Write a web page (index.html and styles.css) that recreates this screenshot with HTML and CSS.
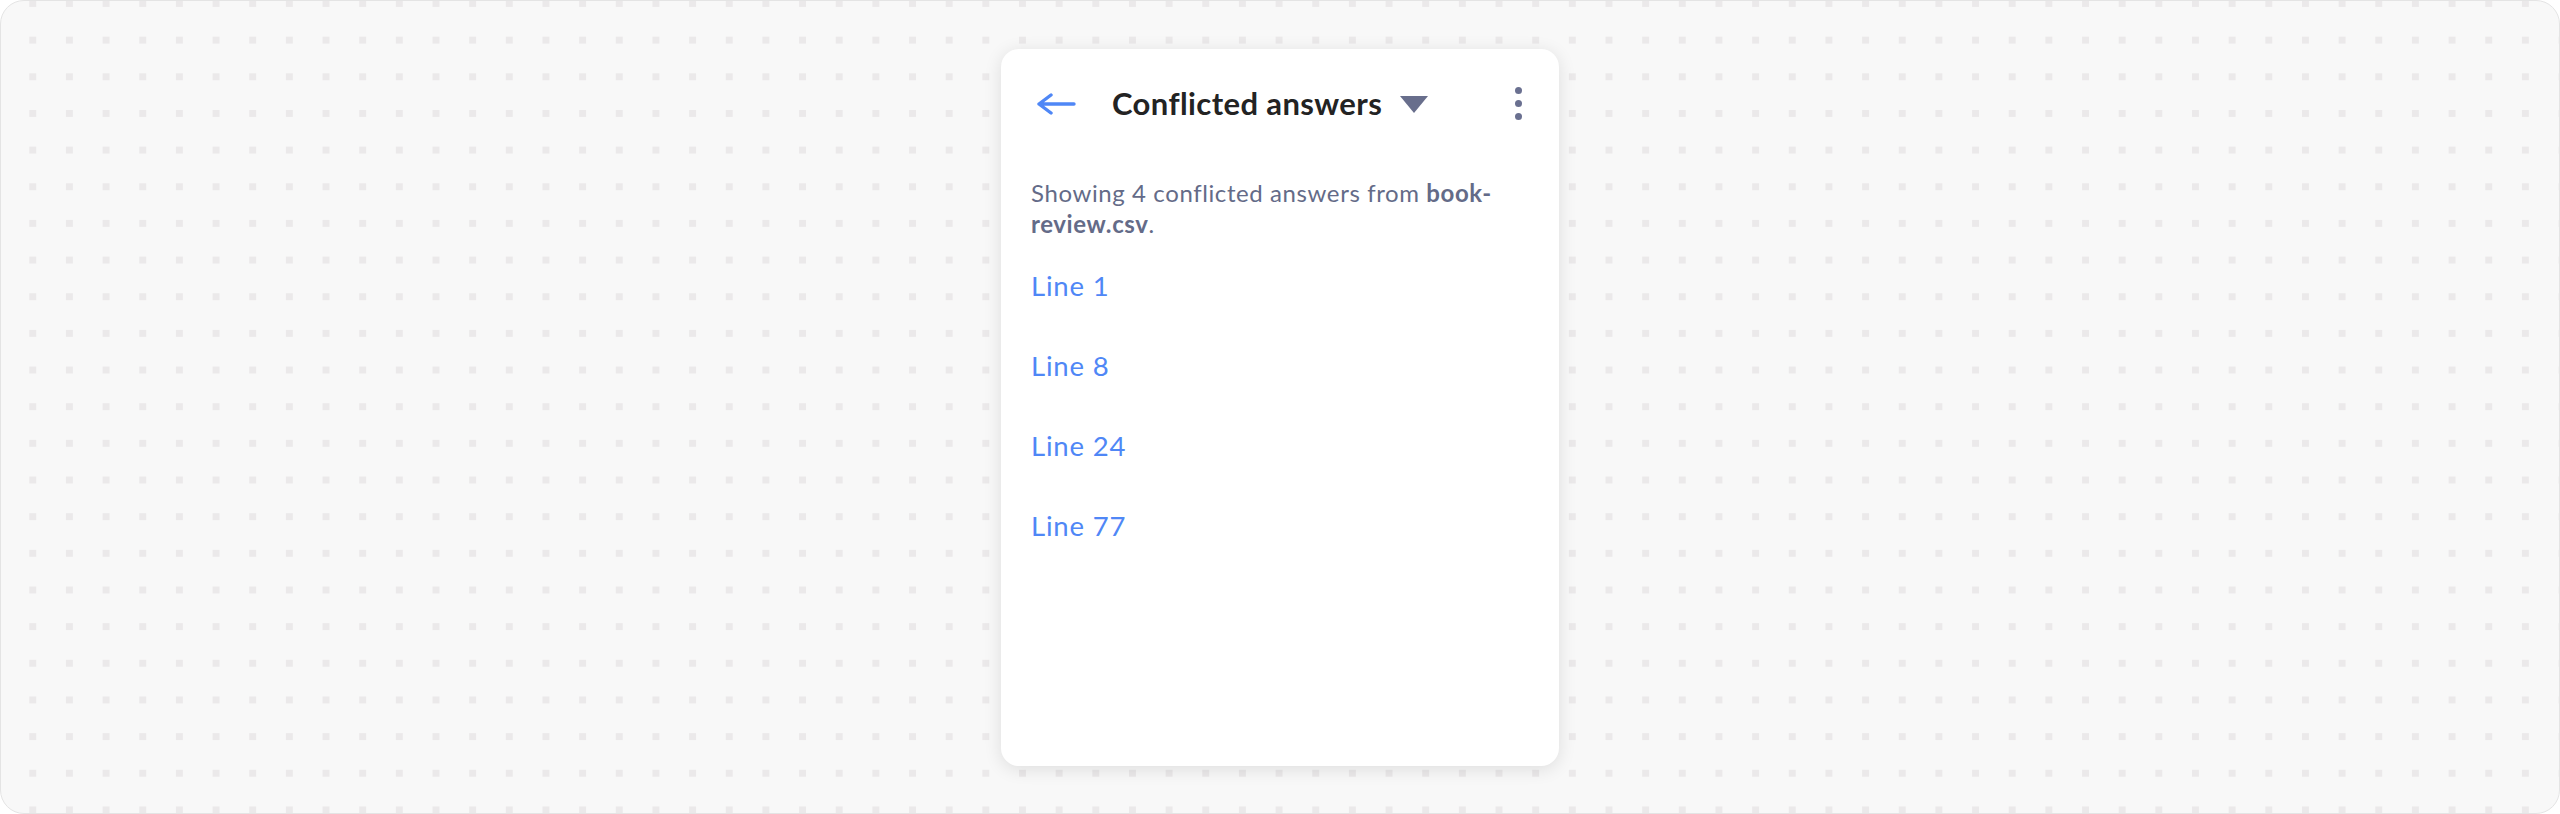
FILE: index.html
```html
<!DOCTYPE html>
<html lang="en">
<head>
<meta charset="utf-8">
<title>Conflicted answers</title>
<link rel="stylesheet" href="styles.css">
</head>
<body>
<div class="frame">
  <section class="card">
    <header class="card-header">
      <button class="icon-btn back" aria-label="Back">
        <svg width="40" height="22" viewBox="0 0 40 22" aria-hidden="true">
          <path d="M38 11 H3 M15 2 L3 11 L15 20" fill="none" stroke="#4f87f6" stroke-width="3.4" stroke-linecap="round" stroke-linejoin="round"/>
        </svg>
      </button>
      <h1 class="title">Conflicted answers</h1>
      <svg class="caret" width="28" height="17" viewBox="0 0 28 17" aria-hidden="true">
        <polygon points="0,0 28,0 14,17" fill="#686e8c"/>
      </svg>
      <button class="icon-btn kebab" aria-label="More options">
        <span class="dot"></span><span class="dot"></span><span class="dot"></span>
      </button>
    </header>
    <p class="summary">Showing 4 conflicted answers from <strong>book-review.csv</strong>.</p>
    <ul class="lines">
      <li><a href="#">Line 1</a></li>
      <li><a href="#">Line 8</a></li>
      <li><a href="#">Line 24</a></li>
      <li><a href="#">Line 77</a></li>
    </ul>
  </section>
</div>
</body>
</html>
```

FILE: styles.css
```css
* { box-sizing: border-box; }

html, body {
  margin: 0;
  padding: 0;
  background: #ffffff;
}

body {
  font-family: "Lato", "Noto Sans", sans-serif;
}

.frame {
  width: 2560px;
  height: 814px;
  border: 1px solid #e4e4e4;
  border-radius: 24px;
  background-color: #f8f8f8;
  background-image: conic-gradient(from 270deg at 7.33px 7.33px, #ebe9ea 25%, transparent 0);
  background-size: 36.667px 36.667px;
  background-position: 28.3px -1px;
  display: flex;
  align-items: center;
  justify-content: center;
}

.card {
  width: 558px;
  height: 717px;
  background: #ffffff;
  border-radius: 18px;
  box-shadow: 0 3px 18px rgba(0, 0, 0, 0.11);
  padding: 0 30px;
}

.card-header {
  height: 110px;
  display: flex;
  align-items: center;
}

.icon-btn {
  border: 0;
  background: none;
  padding: 0;
  cursor: pointer;
}

.back {
  display: flex;
  margin-left: 5px;
}

.title {
  margin: 0 0 0 36px;
  font-size: 31px;
  font-weight: 700;
  letter-spacing: 0.4px;
  color: #232323;
  line-height: 1;
}

.caret {
  margin-left: 18px;
  margin-top: 2px;
}

.kebab {
  margin-left: auto;
  margin-right: 7px;
  display: flex;
  flex-direction: column;
  gap: 5.5px;
  align-items: center;
}

.dot {
  width: 7.4px;
  height: 7.4px;
  border-radius: 50%;
  background: #6a7090;
}

.summary {
  margin: 18px 0 0 0;
  font-size: 24px;
  line-height: 31px;
  letter-spacing: 0.6px;
  color: #646b88;
}

.summary strong {
  font-weight: 700;
}

.lines {
  list-style: none;
  margin: 27px 0 0 0;
  padding: 0;
}

.lines li {
  height: 80px;
}

.lines a {
  font-size: 27.5px;
  line-height: 40px;
  letter-spacing: 0.8px;
  color: #4f87f6;
  text-decoration: none;
}
```
